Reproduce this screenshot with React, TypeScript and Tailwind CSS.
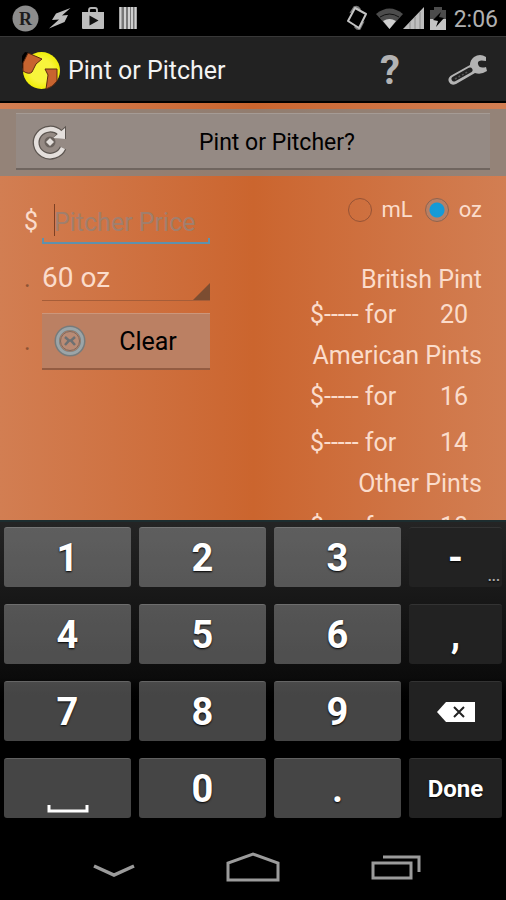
import { useState } from "react";
import type { ReactNode } from "react";
import clsx from "clsx";

const PINTS = [
  { title: "British Pint", sizes: ["20"], rowClass: "h-10 pb-1.5" },
  { title: "American Pints", sizes: ["16", "14"], rowClass: "h-[46px]" },
  { title: "Other Pints", sizes: ["10"], rowClass: "h-[50px]" },
];

function StatusBar() {
  return (
    <div className="flex h-9 shrink-0 items-center justify-between bg-black pr-2 pl-3 text-[#b0b0b0]">
      <div className="flex items-center gap-2.5">
        <svg width="27" height="27" viewBox="0 0 27 27" aria-hidden="true">
          <circle cx="13.5" cy="13.5" r="13" fill="#8c8c8c" />
          <text x="13.5" y="20" textAnchor="middle" fontSize="18" fontWeight="700" fontFamily="Liberation Serif, serif" fill="#1c1c1c">
            R
          </text>
        </svg>
        <svg width="22" height="21" viewBox="0 0 22 21" fill="#bdbdbd" aria-hidden="true">
          <path d="M21.500 0 7 5.500 3 12l7-.5L0 20.500 15.500 14l3.500-7-6 .5z" />
        </svg>
        <svg width="24" height="24" viewBox="0 0 24 24" aria-hidden="true">
          <path d="M8 6V4q0-2 2-2h4q2 0 2 2v2" fill="none" stroke="#b5b5b5" strokeWidth="1.8" />
          <path d="M1 6h22v16q0 1-1 1H2q-1 0-1-1z" fill="#bdbdbd" />
          <path d="m8.500 9.500 9 5-9 5z" fill="#111" />
        </svg>
        <svg width="18" height="22" viewBox="0 0 18 22" className="ml-1" aria-hidden="true">
          <path d="M0 0h18v22H0z" fill="#777" />
          <path d="M1.500 0v22M6 0v22M10 0v22M13 0v22M16.500 0v22" stroke="#d0d0d0" strokeWidth="2" />
        </svg>
      </div>
      <div className="flex items-center">
        <svg width="22" height="26" viewBox="0 0 22 26" className="mr-2" aria-hidden="true">
          <path d="M5 7 8 2q4-1.500 6 2zM17 18l-3 6q-3 1-5-2z" fill="#777" stroke="#777" strokeWidth="1.500" />
          <path d="M9 3 20 9 13 23 2 16z" fill="#000" stroke="#c4c4c4" strokeWidth="2" strokeLinejoin="round" />
        </svg>
        <svg width="27" height="21" viewBox="0 0 27 21" aria-hidden="true">
          <path d="M0 6Q13.500-5 27 6L13.500 21z" fill="#4c4c4c" />
          <path d="M4 9q9.500-6 19 0" fill="none" stroke="#111" strokeWidth="1" />
          <path d="M7 13q6.500-4 13 0l-6.500 8z" fill="#d0d0d0" />
        </svg>
        <svg width="21" height="22" viewBox="0 0 21 22" aria-hidden="true">
          <path d="M0 22 21 0v22z" fill="#bdbdbd" />
          <path d="M7 15v7M12 10v12M17 5v17" stroke="#8a8a8a" />
        </svg>
        <svg width="16" height="23" viewBox="0 0 16 23" className="mr-2 ml-1.5" aria-hidden="true">
          <path d="M4 0h8v3h4v20H0V3h4z" fill="#4c4c4c" />
          <path d="M0 12h16v11H0z" fill="#c4c4c4" />
          <path d="m11 5-8 8 5 1-2 6 8-9-5-1z" fill="#000" />
        </svg>
        <span className="pt-0.5 text-[23px] leading-none">2:06</span>
      </div>
    </div>
  );
}

function AppLogo() {
  return (
    <svg width="40" height="40" viewBox="0 0 40 40" aria-hidden="true">
      <defs>
        <radialGradient id="beer" cx="0.5" cy="0.5" r="0.5">
          <stop offset="0.6" stopColor="#f8f43c" />
          <stop offset="1" stopColor="#f0ee08" />
        </radialGradient>
      </defs>
      <path d="M2 5 5 1l5 1-4 17-4-2z" fill="#000" />
      <circle cx="21.500" cy="19.500" r="18.500" fill="url(#beer)" />
      <path d="M8 2 22 8 16 13 12 21Q9 24 3 20V12z" fill="#c8642f" stroke="#5d2a12" strokeWidth="1" />
      <path d="M25 18h12v12q-4 6-11 8l2-14z" fill="#c8642f" stroke="#5d2a12" strokeWidth="1" />
    </svg>
  );
}

function ActionBar() {
  return (
    <header className="flex h-[67px] shrink-0 items-center border-t border-b-2 border-t-[#383838] border-b-black bg-[#222] pt-1 pr-4 pl-5">
      <AppLogo />
      <h1 className="ml-2 flex-1 text-[25px] text-[#f3f3f3]">Pint or Pitcher</h1>
      <button type="button" aria-label="Help" className="w-14 text-[40px] leading-none font-bold text-[#b3b3b3]">
        ?
      </button>
      <button type="button" aria-label="Settings" className="ml-7">
        <svg width="44" height="34" viewBox="0 0 44 34" aria-hidden="true">
          <path
            d="M40 3Q34-1 28 3q-4 3-4 8L6 21q-5 3-3 7 2 4 7 2l19-11q6 2 12-2l-1-4q-7 2-8-3t8-3z"
            fill="#b3b3b3"
          />
          <path d="m8 25 16-9" stroke="#222" strokeWidth="5" strokeLinecap="round" />
          <path d="m9 25 14-8" stroke="#555" strokeWidth="1.500" strokeDasharray="2 2" />
        </svg>
      </button>
    </header>
  );
}

function UnitRadio({ unit, checked, onChange }: { unit: string; checked: boolean; onChange: () => void }) {
  return (
    <label className="flex items-center gap-2.5 text-[22px] leading-6">
      <input
        type="radio"
        name="unit"
        checked={checked}
        onChange={onChange}
        className="size-6 appearance-none rounded-full border border-[#965335] checked:border-[#8d6450] checked:bg-[radial-gradient(circle,#169bd7_0,#149ad6_7px,#b97f64_8px)]"
      />
      {unit}
    </label>
  );
}

function PintTable() {
  return (
    <div className="w-[172px] self-end">
      {PINTS.map((group) => (
        <section key={group.title}>
          <h2 className="h-9 text-right text-[25px] leading-9 whitespace-nowrap">{group.title}</h2>
          {group.sizes.map((size) => (
            <div key={size} className={clsx("flex items-center justify-between pr-3.5", group.rowClass)}>
              <span>$----- for</span>
              <span>{size}</span>
            </div>
          ))}
        </section>
      ))}
    </div>
  );
}

function Key({ label, dark, children }: { label?: string; dark?: boolean; children: ReactNode }) {
  return (
    <button
      type="button"
      aria-label={label}
      className={clsx(
        "relative flex h-15 items-center justify-center rounded-[3px] border-t font-bold text-white [text-shadow:0_1px_2px_#000]",
        dark ? "border-[#333] bg-[#222]" : "border-white/15 bg-white/27"
      )}
    >
      {children}
    </button>
  );
}

function Keyboard() {
  return (
    <div className="grid shrink-0 grid-cols-[127fr_127fr_127fr_93fr] gap-x-2 gap-y-[17px] border-t-2 border-[#1d2d2f] bg-linear-to-b from-[#242424] via-[#0b0b0b] via-50% to-black to-60% px-1 pt-[5px] pb-4 text-[38px] leading-none">
      <Key>1</Key>
      <Key>2</Key>
      <Key>3</Key>
      <Key dark>
        -
        <span className="absolute right-0.5 bottom-1 text-sm leading-none text-[#aaa]">...</span>
      </Key>
      <Key>4</Key>
      <Key>5</Key>
      <Key>6</Key>
      <Key dark>,</Key>
      <Key>7</Key>
      <Key>8</Key>
      <Key>9</Key>
      <Key dark label="Backspace">
        <svg width="38" height="20" viewBox="0 0 38 20" aria-hidden="true">
          <path d="M0 10 9 0h29v20H9z" fill="#fff" />
          <path d="m17 5 10 10m0-10L17 15" stroke="#222" strokeWidth="2" />
        </svg>
      </Key>
      <Key label="Space">
        <svg width="42" height="8" viewBox="0 0 42 8" className="mt-10" aria-hidden="true">
          <path d="M2 0v6h38V0" fill="none" stroke="#fff" strokeWidth="3" />
        </svg>
      </Key>
      <Key>0</Key>
      <Key>.</Key>
      <Key dark>
        <span className="text-[24px]">Done</span>
      </Key>
    </div>
  );
}

function NavBar() {
  return (
    <nav className="flex h-[66px] shrink-0 items-center justify-between bg-black px-[84px]">
      <button type="button" aria-label="Hide keyboard" className="mt-2 px-2">
        <svg width="44" height="16" viewBox="0 0 44 16" fill="none" stroke="#9b9b9b" strokeWidth="3.500" aria-hidden="true">
          <path d="m2 3 20 9 20-9" />
        </svg>
      </button>
      <button type="button" aria-label="Home" className="mr-2">
        <svg width="54" height="30" viewBox="0 0 54 30" fill="none" stroke="#9b9b9b" strokeWidth="3" aria-hidden="true">
          <path d="M2 28V11L27 2l25 9v17z" />
        </svg>
      </button>
      <button type="button" aria-label="Recent apps">
        <svg width="52" height="28" viewBox="0 0 52 28" fill="none" stroke="#9b9b9b" strokeWidth="3" aria-hidden="true">
          <path d="M3 10h38v15H3zM13 4h36v15" />
        </svg>
      </button>
    </nav>
  );
}

export default function App() {
  const [unit, setUnit] = useState("oz");
  const [price, setPrice] = useState("");

  return (
    <div className="flex h-screen flex-col overflow-hidden bg-black font-[Roboto,sans-serif]">
      <StatusBar />
      <ActionBar />

      <main className="flex min-h-0 flex-1 flex-col overflow-hidden bg-linear-to-r from-[#d27e52] via-[#cb652e] to-[#d27e52] text-[25px] text-[#fbdccb]">
        <div className="mt-1.5 shrink-0 bg-[#7f8586]/75 px-4 pt-1 pb-1.5">
          <button
            type="button"
            className="flex h-[57px] w-full items-center border-t border-b-2 border-t-[#a59b95] border-b-[#6f655f] bg-[#958a84] pl-4 text-[23px] text-black"
          >
            <svg width="36" height="36" viewBox="0 0 36 36" fill="none" className="mt-0.5" aria-hidden="true">
              <g stroke="#5c5550" strokeWidth="7">
                <path d="M31 24a14 13.500 0 1 1-3-15" />
                <path d="m23 13 10 1V4z" strokeWidth="2" />
              </g>
              <path d="M31 24a14 13.500 0 1 1-3-15" stroke="#e4dfdc" strokeWidth="4.500" />
              <path d="m21 14 12 1V4z" fill="#e4dfdc" />
              <circle cx="18" cy="18" r="5.500" fill="#6b625d" />
              <path d="m18 14 4 4-4 4-4-4z" fill="#e4dfdc" />
            </svg>
            <span className="flex-1 pt-1 pr-1">Pint or Pitcher?</span>
          </button>
        </div>

        <div className="flex items-start justify-between px-6">
          <div className="grid shrink-0 grid-cols-[18px_168px] items-center pt-6">
            <label htmlFor="price">$</label>
            <div className="relative h-11">
              <input
                id="price"
                value={price}
                onChange={(e) => setPrice(e.target.value)}
                placeholder="Pitcher Price"
                className="h-11 w-full pl-3 outline-none placeholder:text-[#a07f6e]"
              />
              <span className="absolute top-1 left-3 h-8 w-px bg-[#7d4023]" />
              <span className="absolute inset-x-0 bottom-0 h-1.5 border-x-2 border-b-2 border-[#5f91ac]" />
            </div>
            <span className="pt-3 text-[#8d5335]">.</span>
            <div className="relative mt-3 border-b border-[#a65d38]">
              <select aria-label="Pitcher size" className="h-11 w-full appearance-none text-[28px] outline-none">
                <option>60 oz</option>
                <option>48 oz</option>
              </select>
              <svg width="17" height="17" viewBox="0 0 17 17" className="pointer-events-none absolute right-0 bottom-0" aria-hidden="true">
                <path d="M17 0v17H0z" fill="#7c4d31" />
              </svg>
            </div>
            <span className="pt-3 text-[#8d5335]">.</span>
            <button
              type="button"
              onClick={() => setPrice("")}
              className="mt-3 flex h-[57px] items-center border-t border-b-2 border-t-[#cc967b] border-b-[#935c42] bg-[#bb8063] pl-3 text-black"
            >
              <svg width="32" height="32" viewBox="0 0 32 32" fill="none" aria-hidden="true">
                <circle cx="16" cy="16" r="13" stroke="#777b7b" strokeWidth="5" />
                <circle cx="16" cy="16" r="12.500" stroke="#9ba5a8" strokeWidth="3" />
                <circle cx="16" cy="16" r="9.500" fill="#b98b75" stroke="#7b6a60" />
                <path d="m11 12 4 3.500L11 20m10-8-4 3.500 4 4.500M14 15.500h4" stroke="#6d7072" strokeWidth="2.500" />
              </svg>
              <span className="flex-1 pt-0.5">Clear</span>
            </button>
          </div>

          <div className="flex flex-col">
            <div className="mt-[22px] mb-10 flex justify-end gap-3">
              {["mL", "oz"].map((u) => (
                <UnitRadio key={u} unit={u} checked={unit === u} onChange={() => setUnit(u)} />
              ))}
            </div>
            <PintTable />
          </div>
        </div>
      </main>

      <Keyboard />
      <NavBar />
    </div>
  );
}
